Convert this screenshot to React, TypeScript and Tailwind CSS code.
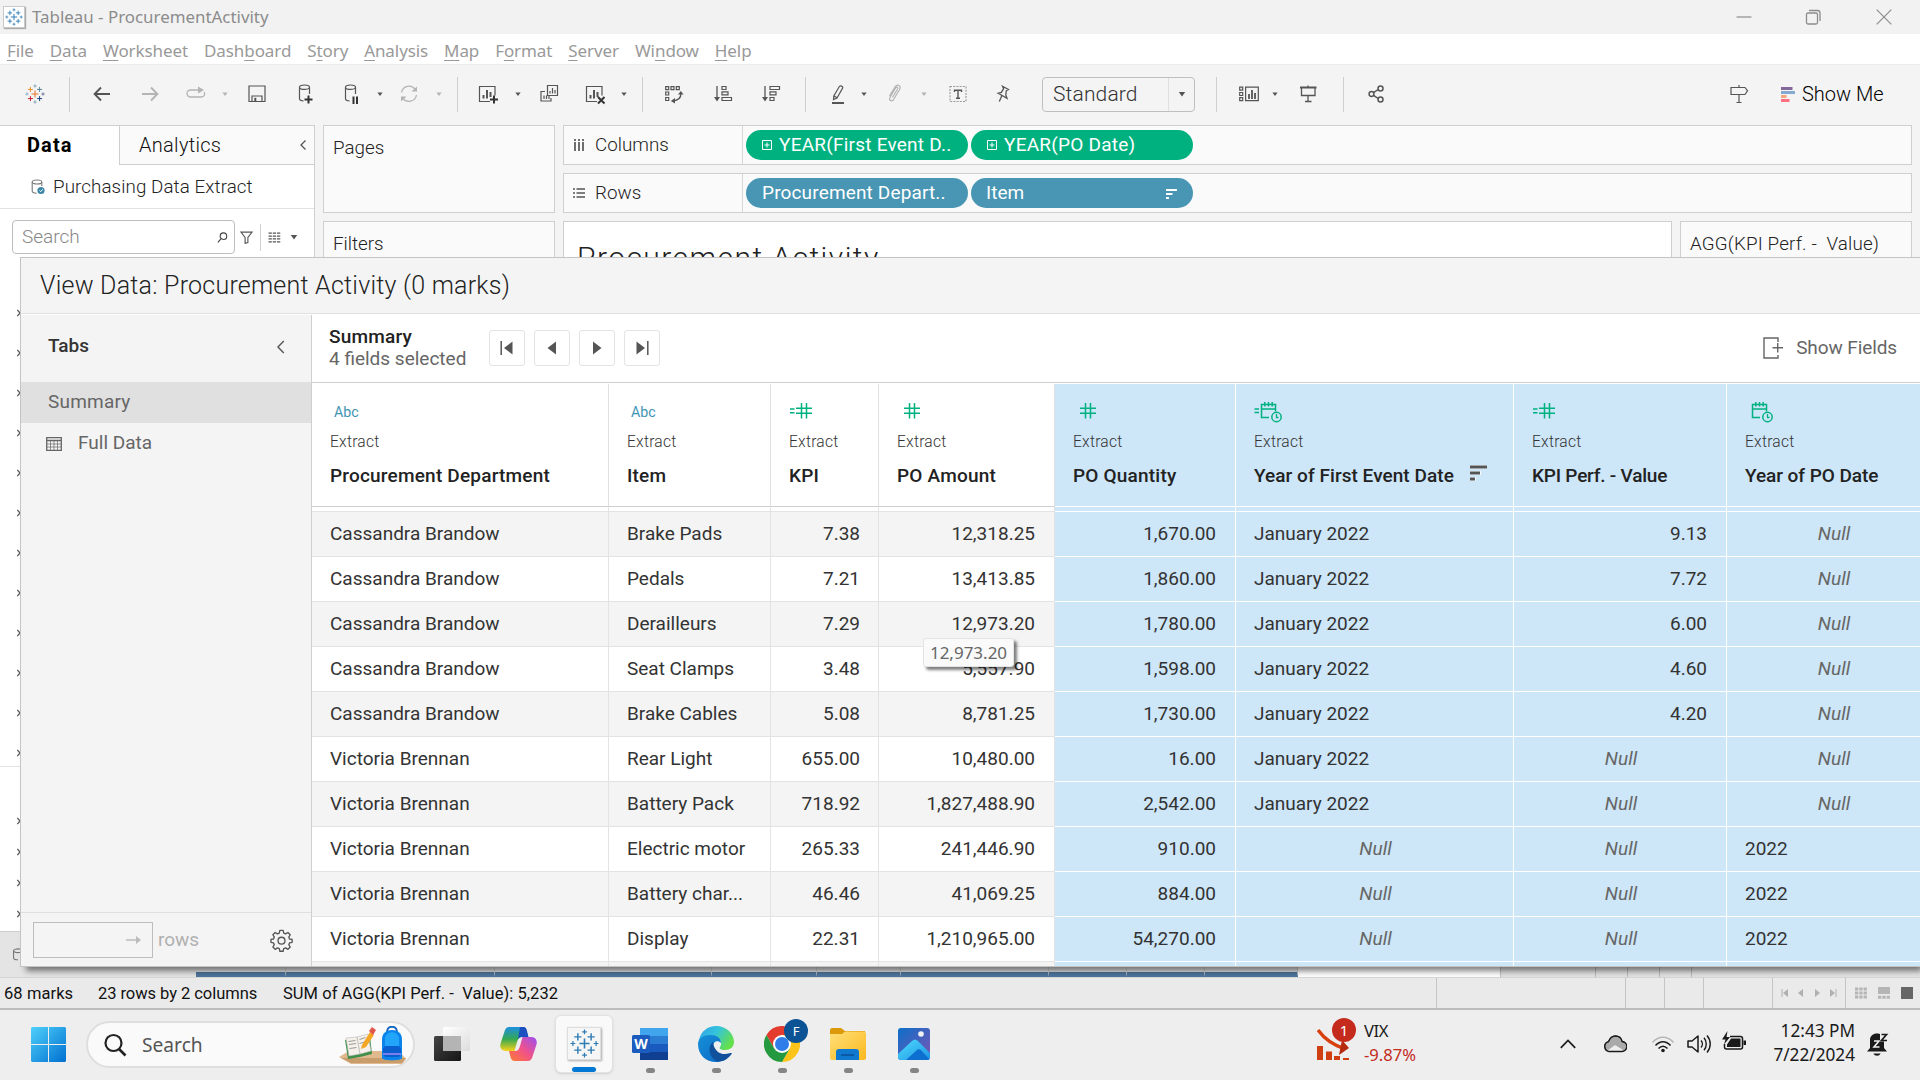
import React from "react";

/* ---------- icons ---------- */

type IconProps = { className?: string; children: React.ReactNode; box?: string };
function Icon({ className = "", children, box = "0 0 24 24" }: IconProps) {
  return (
    <svg viewBox={box} fill="none" stroke="currentColor" className={`shrink-0 ${className}`}>
      {children}
    </svg>
  );
}

function Plus({ x, y, r, c, w }: { x: number; y: number; r: number; c: string; w: number }) {
  return <path d={`M${x - r} ${y}H${x + r}M${x} ${y - r}V${y + r}`} stroke={c} strokeWidth={w} />;
}

const blueMarks = ["#2f7cb5", "#2f7cb5", "#2f7cb5", "#2f7cb5", "#2f7cb5", "#2f7cb5", "#2f7cb5", "#2f7cb5", "#2f7cb5"];
const colorMarks = ["#e8762c", "#eb912c", "#5b879b", "#c72035", "#1f457e", "#7a9db5", "#7a9db5", "#8aa8c0", "#5b6591"];

function TableauMark({ className, colors }: { className: string; colors: string[] }) {
  return (
    <Icon className={className}>
      <Plus x={12} y={12} r={4.2} c={colors[0]} w={1.3} />
      <Plus x={6.5} y={6.5} r={3} c={colors[1]} w={1.2} />
      <Plus x={17.5} y={6.5} r={3} c={colors[2]} w={1.2} />
      <Plus x={6.5} y={17.5} r={3} c={colors[3]} w={1.2} />
      <Plus x={17.5} y={17.5} r={3} c={colors[4]} w={1.2} />
      <Plus x={12} y={2.4} r={2} c={colors[5]} w={1} />
      <Plus x={12} y={21.6} r={2} c={colors[6]} w={1} />
      <Plus x={2.4} y={12} r={2} c={colors[7]} w={1} />
      <Plus x={21.6} y={12} r={2} c={colors[8]} w={1} />
    </Icon>
  );
}

function Caret({ className = "" }: { className?: string }) {
  return (
    <Icon box="0 0 8 8" className={`h-2 w-2 ${className}`}>
      <path d="M1.4 2.4h5.2L4 6z" fill="currentColor" stroke="none" />
    </Icon>
  );
}

function Sep({ className }: { className: string }) {
  return <div className={`h-[35px] w-px shrink-0 bg-[#cfcfcf] ${className}`} />;
}

const cyl = "M6.5 5.5v11.2c0 1.2 1.6 2 4 2.2M16.5 5.5v6.5";

function Database({ children, className }: { children: React.ReactNode; className: string }) {
  return (
    <Icon className={className}>
      <ellipse cx="11.5" cy="5.2" rx="5" ry="2.2" strokeWidth="1.2" />
      <path d={cyl} strokeWidth="1.2" />
      {children}
    </Icon>
  );
}

function BarsBox({ children, className }: { children?: React.ReactNode; className: string }) {
  return (
    <Icon className={className}>
      <path d="M14 19.5H3.5v-15h15.5v9" strokeWidth="1.2" />
      <path d="M7.5 16.5v-3.5M11 16.5V8M14.5 15v-5" strokeWidth="2" />
      {children}
    </Icon>
  );
}

/* ---------- toolbar ---------- */

function Toolbar() {
  const i = "h-6 w-6 text-[#555]";
  return (
    <div className="flex h-[61px] shrink-0 items-center border-t border-[#ececec] bg-[#f4f4f4] pb-[2px] text-[#555]">
      <TableauMark className="ml-[25px] h-[20px] w-[20px]" colors={colorMarks} />
      <Sep className="ml-[24px]" />
      <Icon className={`ml-[20px] ${i}`}>
        <path d="M20 12H5M11 5.500 4.600 12l6.400 6.500" strokeWidth="1.900" />
      </Icon>
      <Icon className="ml-[24px] h-6 w-6 text-[#b4b4b4]">
        <path d="M4 12h15M13 5.500l6.400 6.500-6.400 6.500" strokeWidth="1.900" />
      </Icon>
      <Icon className="ml-[22px] h-6 w-6 text-[#b4b4b4]">
        <path d="M14 8H6.500a3.500 3.500 0 0 0 0 7h11a3.200 3.200 0 0 0 2.600-5" strokeWidth="1.300" />
        <path d="M14 4.500 20 8l-6 3.500z" fill="currentColor" stroke="none" />
      </Icon>
      <Caret className="ml-[13px] text-[#b4b4b4]" />
      <Icon className={`ml-[16px] ${i}`}>
        <path d="M4 4h16v15.500H4zM7 19.500V14h10v5.500" strokeWidth="1.200" />
        <path d="M9.300 15.800h2v3.700h-2z" fill="currentColor" stroke="none" />
      </Icon>
      <Database className={`ml-[24px] ${i}`}>
        <path d="M15.500 13.500v8M11.500 17.500h8" stroke="#333" strokeWidth="2" />
      </Database>
      <Database className={`ml-[22px] ${i}`}>
        <path d="M14.500 14.500v7.500M18 14.500v7.500" stroke="#333" strokeWidth="2" />
      </Database>
      <Caret className="ml-[13px]" />
      <Icon className="ml-[13px] h-6 w-6 text-[#b4b4b4]">
        <path d="M4.500 10.500a7.600 7.600 0 0 1 13.700-3M19.500 13a7.600 7.600 0 0 1-13.700 3.200" strokeWidth="1.300" />
        <path d="M14.500 9.500h5.500V4.500zM9.500 14.500H4v5z" fill="currentColor" stroke="none" />
      </Icon>
      <Caret className="ml-[14px] text-[#b4b4b4]" />
      <Sep className="ml-[14px]" />
      <BarsBox className={`ml-[18px] ${i}`}>
        <path d="M18 13.500v8M14 17.500h8" stroke="#333" strokeWidth="2" />
      </BarsBox>
      <Caret className="ml-[14px]" />
      <Icon className={`ml-[15px] ${i}`}>
        <path d="M10.500 3.500h10v10h-10zM8 9.500H4v9.500h10v-3" strokeWidth="1.200" />
        <path d="M13 11.500V9M15.500 11.500V6M18 11.500V8M7 17v-3.500M9.500 17v-3.500M12 17v-3.500" strokeWidth="1.200" />
      </Icon>
      <BarsBox className={`ml-[22px] ${i}`}>
        <path d="m15 15 6.500 6.500M21.500 15 15 21.500" stroke="#333" strokeWidth="2" />
      </BarsBox>
      <Caret className="ml-[13px]" />
      <Sep className="ml-[14px]" />
      <Icon className={`ml-[19px] ${i}`}>
        <path d="M3.700 4.600h3v3h-3zM9 4.600h3v3H9zM14.300 4.600h3v3h-3zM3.700 10h3v3h-3zM3.700 15.500h3v3h-3z" strokeWidth="1.200" />
        <path d="M18.800 11c.3 4-2 7.500-8 8" strokeWidth="1.300" />
        <path d="M16 12.500h5.600L18.800 9zM13 16v5.600L8.800 19z" fill="currentColor" stroke="none" />
      </Icon>
      <Icon className={`ml-[25px] ${i}`}>
        <path d="M11 4.500h4v3h-4zM11 9.800h6v3h-6zM11 15.500h9.500v3H11z" strokeWidth="1.200" />
        <path d="M6 4v13" strokeWidth="1.300" />
        <path d="M3 15h6l-3 4.500z" fill="currentColor" stroke="none" />
      </Icon>
      <Icon className={`ml-[24px] ${i}`}>
        <path d="M11 4.500h9.500v3H11zM11 9.800h6v3h-6zM11 15.500h4v3h-4z" strokeWidth="1.200" />
        <path d="M6 4v13" strokeWidth="1.300" />
        <path d="M3 15h6l-3 4.500z" fill="currentColor" stroke="none" />
      </Icon>
      <Sep className="ml-[22px]" />
      <Icon className={`ml-[20px] ${i}`}>
        <path d="M13.500 4.300c1-1 3.500 0 3.300 1.500L11 16l-3.500 1.500.3-3.500zM8 14l3 1.800" strokeWidth="1.200" />
        <path d="M6 21h12" strokeWidth="2" />
      </Icon>
      <Caret className="ml-[10px]" />
      <Icon className="ml-[15px] h-6 w-6 text-[#b4b4b4]">
        <path d="m9.500 15.500 5-8.200c1-1.800-1-2.900-2-1.200L7.200 15c-1.900 3.500 1.500 5.300 3.500 2.300l5.800-9.500c2.300-4.300-2.200-6.300-4.700-2.500L6.500 14" strokeWidth="1.200" />
      </Icon>
      <Caret className="ml-[13px] text-[#b4b4b4]" />
      <Icon className={`ml-[18px] ${i}`}>
        <path d="M4 4.500h16v15H4z" strokeWidth="1.100" strokeDasharray="2 1.200" stroke="#999" />
        <path d="M8.500 10V8.300h7V10M12 8.300v8M10 16.200h4" strokeWidth="1.400" />
      </Icon>
      <Icon className={`ml-[21px] ${i}`}>
        <path d="m11.500 4.200 6 3.300-2.200 1.300-.5 4.200 1.200 3.200-8.800-4.900 3.200-.9 2.200-3.700zM10.800 13.800 8.300 19.500" strokeWidth="1.300" />
      </Icon>
      <div className="ml-[27px] flex h-[35px] w-[153px] shrink-0 items-center rounded-sm border border-[#bfbfbf]">
        <span className="flex-1 pl-[10px] text-[21px] leading-none font-[350] tracking-[0.150px] text-[#333]">Standard</span>
        <span className="flex h-full w-[26px] items-center justify-center border-l border-[#e0e0e0]">
          <Caret className="scale-125" />
        </span>
      </div>
      <Sep className="ml-[21px]" />
      <Icon className={`ml-[20px] ${i}`}>
        <path d="M2.700 5.200h3v3h-3zM2.700 10.500h3v3h-3zM2.700 15.700h3v3h-3zM8.600 5.200h12.700v13.500H8.600z" strokeWidth="1.200" />
        <path d="M12 17v-5M15 17V8M18 17v-6" strokeWidth="1.800" />
      </Icon>
      <Caret className="ml-[10px]" />
      <Icon className={`ml-[17px] ${i}`}>
        <path d="M4 5.500h16.500" strokeWidth="2" />
        <path d="M5.500 6v7.500h13.500V6M12 3.500V5M12 14v5.500M9 19.500h6.500" strokeWidth="1.300" />
      </Icon>
      <Sep className="ml-[23px]" />
      <Icon className={`ml-[21px] ${i}`}>
        <path d="m8.500 10.700 4.700-3.200M8.500 13.300l4.700 3.200" strokeWidth="1.500" />
        <circle cx="6.500" cy="12" r="2.400" strokeWidth="1.500" />
        <circle cx="15.500" cy="6.500" r="2.500" strokeWidth="1.500" />
        <circle cx="15.500" cy="17.500" r="2.500" strokeWidth="1.500" />
      </Icon>
      <div className="ml-auto flex items-center pr-[34px]">
        <Icon className="h-6 w-6">
          <path d="M4 5.500h14l2.500 3.300-2.500 3.700H4zM12 3v2M12 12.500v8.500M9.500 20.500h5" strokeWidth="1.200" />
        </Icon>
        <svg viewBox="0 0 14 15" className="ml-[30px] h-[15px] w-[14px]">
          <path d="M0 0h11.500v3H0z" fill="#85689c" />
          <path d="M0 4h14v3H0z" fill="#85a9cf" />
          <path d="M0 8h5.500v3H0z" fill="#f5a47c" />
          <path d="M0 12h8.500v3H0z" fill="#ff6f7f" />
        </svg>
        <span className="ml-[7px] w-[84px] text-[20px] leading-none font-[350] whitespace-nowrap text-black">Show Me</span>
      </div>
    </div>
  );
}

/* ---------- title bar and menu ---------- */

const menu: [string, string, string][] = [
  ["", "F", "ile"], ["", "D", "ata"], ["", "W", "orksheet"], ["Dash", "b", "oard"], ["S", "t", "ory"],
  ["", "A", "nalysis"], ["", "M", "ap"], ["F", "o", "rmat"], ["", "S", "erver"], ["Wi", "n", "dow"], ["", "H", "elp"],
];

function TitleBar() {
  return (
    <div className="flex h-[34px] shrink-0 items-center bg-[#f2f2f2] text-[#8c8c8c]">
      <div className="ml-[3px] flex h-[22px] w-[22px] items-center justify-center border border-[#c9c9c9] bg-white shadow-[1px_1px_1px_#aaa]">
        <TableauMark className="h-[18px] w-[18px]" colors={blueMarks} />
      </div>
      <span className="ml-[7px] pt-px font-['Noto_Sans'] text-[16.900px] leading-none">Tableau - ProcurementActivity</span>
      <div className="ml-auto flex items-center pr-[28px]">
        <Icon box="0 0 16 16" className="h-4 w-4"><path d="M.5 8h15" strokeWidth="1.200" /></Icon>
        <Icon box="0 0 16 16" className="ml-[53px] h-4 w-4">
          <rect x="1.500" y="4" width="11" height="11" rx="1.500" strokeWidth="1.300" />
          <path d="M4 1.500h8.500c1.500 0 2.500 1 2.500 2.500v8" strokeWidth="1.300" />
        </Icon>
        <Icon box="0 0 16 16" className="ml-[55px] h-4 w-4"><path d="m.7.700 14.600 14.600M15.300.700.700 15.300" strokeWidth="1.200" /></Icon>
      </div>
    </div>
  );
}

function MenuBar() {
  return (
    <div className="flex h-[30px] shrink-0 items-center gap-[15.900px] bg-white pt-[3px] pl-[7px] font-['Noto_Sans'] text-[17px] leading-none tracking-[-0.080px] text-[#999]">
      {menu.map(([a, u, b]) => (
        <span key={a + u + b}>
          {a}<span className="underline decoration-1 underline-offset-[3px]">{u}</span>{b}
        </span>
      ))}
    </div>
  );
}

/* ---------- worksheet behind the dialog ---------- */

function DataPane() {
  return (
    <div className="flex w-[315px] shrink-0 flex-col">
      <div className="flex h-[807px] flex-col border-t border-r border-b border-[#cfcfcf] bg-white">
        <div className="flex h-[39px] shrink-0">
          <div className="flex w-[119px] items-center pb-[2px] pl-[27px] text-[20px] font-bold tracking-[1.100px] text-black">Data</div>
          <div className="flex flex-1 items-center justify-between border-b border-l border-[#cfcfcf] bg-[#fafafa] pr-[7px] pl-[19px] text-[20px] font-[350] tracking-[0.300px] text-[#111]">
            Analytics
            <Icon box="0 0 8 12" className="h-[12px] w-[8px] text-[#555]"><path d="M6.500 1.500 2 6l4.500 4.500" strokeWidth="1.300" /></Icon>
          </div>
        </div>
        <div className="flex h-[44px] shrink-0 items-center border-b border-[#e2e2e2] pl-[31px]">
          <Icon box="0 0 14 16" className="h-4 w-[14px] text-[#777]">
            <ellipse cx="6" cy="3" rx="4.800" ry="2" strokeWidth="1.100" />
            <path d="M1.200 3v9c0 1.500 2 2.200 4.500 2.200M10.800 3v4" strokeWidth="1.100" />
            <circle cx="10" cy="11.500" r="3.600" fill="#3d86a8" stroke="none" />
            <path d="m8.500 11.500 1.200 1.200 2-2.400" stroke="#fff" strokeWidth="1" />
          </Icon>
          <span className="ml-[8px] pt-px text-[18.800px] font-[350] tracking-[0.080px] text-[#222]">Purchasing Data Extract</span>
        </div>
        <div className="flex h-[56px] shrink-0 items-center pl-3">
          <div className="flex h-[34px] w-[223px] items-center justify-between rounded-sm border border-[#bdbdbd] pr-[6px] pl-[9px] text-[19px] font-light text-[#888]">
            Search
            <Icon box="0 0 12 12" className="h-[11px] w-[11px] text-[#444]">
              <circle cx="7" cy="4.500" r="3.600" strokeWidth="1.200" /><path d="M4.500 7.200 1 11.300" strokeWidth="1.200" />
            </Icon>
          </div>
          <Icon box="0 0 14 14" className="ml-[5px] h-[13px] w-[13px] text-[#555]"><path d="M1 1.200h12L8.500 7v5.500l-3 .8V7z" strokeWidth="1.200" /></Icon>
          <div className="ml-[7px] h-[27px] w-px bg-[#d0d0d0]" />
          <Icon box="0 0 13 12" className="ml-[7px] h-[11px] w-[13px] text-[#555]"><path d="M0 1.200h13M0 4.400h13M0 7.600h13M0 10.800h13" strokeWidth="1.300" strokeDasharray="3.600 1" /></Icon>
          <Caret className="ml-[9px] scale-125 text-[#555]" />
        </div>
        <div className="mt-[28px] flex h-[474px] shrink-0 flex-col border-b border-[#e2e2e2] pl-[12px]">
          {Array.from({ length: 12 }, (_, k) => (
            <div key={k} className="flex h-[40px] shrink-0 items-center"><FieldCaret /></div>
          ))}
        </div>
        <div className="mt-[38px] flex flex-col pl-[12px]">
          {Array.from({ length: 4 }, (_, k) => (
            <div key={k} className="flex h-[31px] shrink-0 items-center"><FieldCaret /></div>
          ))}
        </div>
      </div>
      <div className="flex h-[45px] items-center bg-[#e4e4e4] pl-[12px]">
        <Icon box="0 0 12 14" className="h-[13px] w-[12px] text-[#777]">
          <ellipse cx="6" cy="3" rx="4.800" ry="2" strokeWidth="1.200" /><path d="M1.200 3v7.500c0 1.500 2 2.200 4.800 2.200M10.800 3v7" strokeWidth="1.200" />
        </Icon>
      </div>
    </div>
  );
}

function FieldCaret() {
  return <Icon box="0 0 8 8" className="h-[8px] w-[8px] text-[#555]"><path d="m5.300.800 2.700 3.200-2.700 3.200" strokeWidth="1.200" /></Icon>;
}

function GreenPill({ children }: { children: React.ReactNode }) {
  return (
    <div className="flex h-[30px] w-[222px] items-center rounded-full bg-[#00b180] pl-4 text-[19px] tracking-[0.230px] whitespace-nowrap text-white">
      <Icon box="0 0 10 10" className="mr-[7px] h-[10px] w-[10px]"><path d="M.5.500h9v9h-9zM2.500 5h5M5 2.500v5" strokeWidth="1" /></Icon>
      {children}
    </div>
  );
}

function Shelf({ label, icon, children }: { label: string; icon: React.ReactNode; children: React.ReactNode }) {
  return (
    <div className="flex h-[40px] shrink-0 border border-[#cfcfcf] bg-[#fafafa]">
      <div className="flex w-[179px] items-center border-r border-[#d6d6d6] pl-[9px] text-[18.800px] font-[350] text-[#222]">
        {icon}<span className="ml-[10px] pt-px">{label}</span>
      </div>
      <div className="flex items-center gap-[3px] pl-[3px]">{children}</div>
    </div>
  );
}

function Workspace() {
  return (
    <div className="flex h-[852px] shrink-0 bg-[#f4f4f4]">
      <DataPane />
      <div className="ml-2 flex w-[232px] shrink-0 flex-col gap-2 text-[18.800px] font-[350] text-[#222]">
        <div className="h-[88px] border border-[#cfcfcf] bg-[#fafafa] pt-[8px] pl-[9px]">Pages</div>
        <div className="flex-1 border border-[#cfcfcf] bg-[#fafafa] pt-[8px] pl-[9px]">Filters</div>
      </div>
      <div className="ml-[8px] flex w-[1349px] shrink-0 flex-col gap-2">
        <Shelf label="Columns" icon={<Icon box="0 0 12 12" className="h-[12px] w-[12px]"><path d="M2 0v2M6 0v2M10 0v2M2 3v9M6 3v9M10 3v9" strokeWidth="1.700" stroke="#555" /></Icon>}>
          <GreenPill>YEAR(First Event D..</GreenPill>
          <GreenPill>YEAR(PO Date)</GreenPill>
        </Shelf>
        <Shelf label="Rows" icon={<Icon box="0 0 12 12" className="h-[12px] w-[12px]"><path d="M0 2h2M0 6h2M0 10h2M3.500 2H12M3.500 6H12M3.500 10H12" strokeWidth="1.700" stroke="#555" /></Icon>}>
          <div className="flex h-[30px] w-[222px] items-center rounded-full bg-[#4896b4] pt-px pl-4 text-[19px] tracking-[0.150px] whitespace-nowrap text-white">Procurement Depart..</div>
          <div className="flex h-[30px] w-[222px] items-center justify-between rounded-full bg-[#4896b4] pt-px pr-4 pl-[15px] text-[19px] text-white">
            Item
            <Icon box="0 0 11 10" className="h-[10px] w-[11px]"><path d="M0 1h11M0 5h6.500M0 9h3" strokeWidth="2" /></Icon>
          </div>
        </Shelf>
        <div className="flex flex-1 gap-[8px]">
          <div className="w-[1109px] border border-[#cfcfcf] bg-white pt-[13px] pl-[13px] text-[30px] font-light tracking-[1.450px] text-[#222]">Procurement Activity</div>
          <div className="flex-1 border border-[#cfcfcf] bg-[#fafafa] pt-[8px] pl-[9px] text-[18.800px] font-[350] tracking-[0.160px] whitespace-pre text-[#222]">AGG(KPI Perf. -  Value)</div>
        </div>
      </div>
    </div>
  );
}

/* ---------- view data dialog ---------- */

const Hash = ({ calc }: { calc?: boolean }) => (
  <Icon box="0 0 24 16" className="h-[16px] w-[24px] text-[#00b180]">
    {calc && <path d="M1 6h4.500M1 9.700h4.500" strokeWidth="1.500" />}
    <path d="M7 5.300h16M7 10.300h16M12.500 0v15.500M17.500 0v15.500" strokeWidth="1.500" />
  </Icon>
);

const DateTime = ({ calc }: { calc?: boolean }) => (
  <Icon box="0 0 28 21" className="mt-[2px] h-[21px] w-[28px] text-[#00b180]">
    {calc && <path d="M.5 7H5M.5 10.500H5" strokeWidth="1.500" />}
    <path d="M15 15.500H7.500v-13h14v7M7.500 7H21.500M10.800 0v4.500M14.500 0v4.500M18.200 0v4.500" strokeWidth="1.500" />
    <circle cx="22.500" cy="15" r="4.700" strokeWidth="1.500" />
    <path d="M22.500 12v3.500h2" strokeWidth="1.300" />
  </Icon>
);

const Abc = () => <span className="pt-[3px] pl-[4px] text-[14.200px] text-[#4394b3]">Abc</span>;

type Col = { name: string; width: string; icon: React.ReactNode; blue?: boolean; sort?: boolean; spacing?: string };
const columns: Col[] = [
  { name: "Procurement Department", width: "w-[297px]", icon: <Abc /> },
  { name: "Item", width: "w-[162px]", icon: <Abc /> },
  { name: "KPI", width: "w-[108px]", icon: <Hash calc /> },
  { name: "PO Amount", width: "w-[176px]", icon: <Hash /> },
  { name: "PO Quantity", width: "w-[181px]", icon: <Hash />, blue: true },
  { name: "Year of First Event Date", width: "w-[278px]", icon: <DateTime calc />, blue: true, sort: true, spacing: "tracking-[0.050px]" },
  { name: "KPI Perf. - Value", width: "w-[213px]", icon: <Hash calc />, blue: true, spacing: "tracking-[-0.220px]" },
  { name: "Year of PO Date", width: "w-[213px]", icon: <DateTime />, blue: true, spacing: "tracking-[-0.050px]" },
];
const align = ["", "", "justify-end", "justify-end pr-[19px]", "justify-end pr-[19px]", "", "justify-end pr-[19px]", ""];

const J = "January 2022";
const N = "Null";
const CB = "Cassandra Brandow";
const VB = "Victoria Brennan";
const data: string[][] = [
  [CB, "Brake Pads", "7.38", "12,318.25", "1,670.00", J, "9.13", N],
  [CB, "Pedals", "7.21", "13,413.85", "1,860.00", J, "7.72", N],
  [CB, "Derailleurs", "7.29", "12,973.20", "1,780.00", J, "6.00", N],
  [CB, "Seat Clamps", "3.48", "5,557.90", "1,598.00", J, "4.60", N],
  [CB, "Brake Cables", "5.08", "8,781.25", "1,730.00", J, "4.20", N],
  [VB, "Rear Light", "655.00", "10,480.00", "16.00", J, N, N],
  [VB, "Battery Pack", "718.92", "1,827,488.90", "2,542.00", J, N, N],
  [VB, "Electric motor", "265.33", "241,446.90", "910.00", N, N, "2022"],
  [VB, "Battery char...", "46.46", "41,069.25", "884.00", N, N, "2022"],
  [VB, "Display", "22.31", "1,210,965.00", "54,270.00", N, N, "2022"],
];

function Row({ cells, height, gray }: { cells: string[]; height: string; gray: boolean }) {
  return (
    <div className={`flex shrink-0 ${height}`}>
      {columns.map((c, i) => {
        const isNull = cells[i] === N;
        const tone = c.blue ? "border-white bg-[#cde6f8]" : gray ? "border-[#e3e3e3] bg-[#f4f4f4]" : "border-[#e3e3e3] bg-white";
        return (
          <div
            key={c.name}
            className={`flex shrink-0 items-center overflow-hidden border-r border-b px-[18px] whitespace-nowrap ${c.width} ${tone} ${isNull ? "justify-center pl-[20px] text-[#666] italic" : align[i]}`}
          >
            {cells[i]}
          </div>
        );
      })}
    </div>
  );
}

function NavButton({ children }: { children: React.ReactNode }) {
  return (
    <div className="flex h-[36px] w-[36px] items-center justify-center rounded-[3px] border border-[#e3e3e3]">
      <Icon box="0 0 14 14" className="h-[14px] w-[14px] text-[#555]">{children}</Icon>
    </div>
  );
}

function Dialog() {
  return (
    <div className="absolute top-[257px] left-[20px] flex h-[710px] w-[1900px] flex-col border-t border-b border-l border-[#c4c4c4] bg-white shadow-[4px_6px_6px_-2px_rgba(0,0,0,0.5)]">
      <div className="flex h-[56px] shrink-0 items-center border-b border-[#e0e0e0] bg-[#f4f4f4] pl-[19px] text-[25px] font-[350] tracking-[0.230px] text-[#222]">
        View Data: Procurement Activity (0 marks)
      </div>
      <div className="flex min-h-0 flex-1 pt-px">
        <div className="flex w-[291px] shrink-0 flex-col border-r border-[#cfcfcf] bg-[#f4f4f4] text-[19px] text-[#666]">
          <div className="flex h-[67px] items-center justify-between pr-[26px] pb-[5px] pl-[27px] font-medium text-[#333]">
            Tabs
            <Icon box="0 0 9 15" className="mt-[2px] h-[14px] w-[9px] text-[#555]"><path d="M8 1 1.800 7.500 8 14" strokeWidth="1.500" /></Icon>
          </div>
          <div className="flex h-[41px] items-center bg-[#e0e0e0] pb-px pl-[27px] tracking-[0.200px]">Summary</div>
          <div className="flex h-[41px] items-center pb-px pl-[25px]">
            <Icon box="0 0 16 14" className="mt-[2px] h-[14px] w-[16px] text-[#666]">
              <path d="M.700.700h14.600v12.600H.700z" strokeWidth="1.300" />
              <path d="M1 3.500h14" strokeWidth="1.500" />
              <path d="M1 7h14M1 10h14M4.500 4v9M8 4v9M11.500 4v9" strokeWidth=".7" />
            </Icon>
            <span className="ml-[16px]">Full Data</span>
          </div>
          <div className="mt-auto flex h-[54px] items-center border-t border-[#e0e0e0] pr-[18px] pl-[12px]">
            <div className="mt-px flex h-[36px] w-[120px] items-center justify-end border border-[#bdbdbd] pr-[11px]">
              <Icon box="0 0 15 10" className="h-[10px] w-[15px] text-[#bbb]"><path d="M0 5h12" strokeWidth="1.500" /><path d="m10 1 5 4-5 4z" fill="currentColor" stroke="none" /></Icon>
            </div>
            <span className="ml-[5px] pt-px text-[19px] text-[#b0b0b0]">rows</span>
            <Icon className="mt-[2px] ml-auto h-[23px] w-[23px] text-[#555]">
              <circle cx="12" cy="12.200" r="3.600" strokeWidth="1.400" />
              <path d="M10.300 1.500h3.400l.6 2.800 2 .8 2.400-1.500 2.400 2.400-1.500 2.400.8 2 2.700.5v3l-2.700.6-.8 1.900 1.500 2.400-2.400 2.400-2.400-1.500-2 .8-.6 2.700h-3.400l-.6-2.700-1.900-.8-2.400 1.500L3 18.800l1.500-2.400-.8-1.900L1 13.900v-3l2.700-.5.8-2L3 6l2.400-2.400 2.400 1.500 1.900-.8z" strokeWidth="1.400" strokeLinejoin="round" />
            </Icon>
          </div>
        </div>
        <div className="flex min-w-0 flex-1 flex-col overflow-hidden">
          <div className="flex h-[68px] shrink-0 items-center border-b border-[#cfcfcf] pr-[23px] pb-[2px] pl-[17px] text-[19px]">
            <div className="w-[160px] leading-[22px]">
              <div className="font-medium tracking-[0.200px] text-[#222]">Summary</div>
              <div className="text-[#666]">4 fields selected</div>
            </div>
            <div className="flex gap-[9px]">
              <NavButton><path d="M1.200 0v14" strokeWidth="1.500" /><path d="M12.500.500v13L4 7z" fill="currentColor" stroke="none" /></NavButton>
              <NavButton><path d="M11 .5v13L2.500 7z" fill="currentColor" stroke="none" /></NavButton>
              <NavButton><path d="M3 .5v13L11.500 7z" fill="currentColor" stroke="none" /></NavButton>
              <NavButton><path d="M12.800 0v14" strokeWidth="1.500" /><path d="M1.500.500v13L10 7z" fill="currentColor" stroke="none" /></NavButton>
            </div>
            <Icon box="0 0 20 22" className="ml-auto h-[22px] w-[20px] text-[#666]">
              <path d="M15 5V1H1v20h14v-3M14.700 6v9.500M9.500 10.700h10.500" strokeWidth="1.400" />
            </Icon>
            <span className="ml-[13px] pt-px tracking-[-0.100px] text-[#666]">Show Fields</span>
          </div>
          <div className="mt-px flex h-[123px] shrink-0">
            {columns.map((c) => (
              <div key={c.name} className={`flex shrink-0 flex-col border-r border-b pl-[18px] whitespace-nowrap ${c.width} ${c.blue ? "border-white bg-[#cde6f8]" : "border-r-[#e0e0e0] border-b-[#cfcfcf]"}`}>
                <div className="mt-[16px] flex h-[22px] items-center">{c.icon}</div>
                <div className="mt-[10px] text-[15.600px] leading-[20px] font-light tracking-[0.220px] text-[#333]">Extract</div>
                <div className={`mt-[12px] flex items-center text-[19px] leading-[24px] font-medium text-[#222] ${c.spacing ?? "tracking-[0.200px]"}`}>
                  {c.name}
                  {c.sort && (
                    <Icon box="0 0 17 16" className="-mt-[6px] ml-[16px] h-[16px] w-[17px] text-[#555]">
                      <path d="M0 2h17M0 8h11M0 14h6" strokeWidth="4" stroke="#f4f9fd" />
                      <path d="M0 2h17M0 8h10M0 14h5" strokeWidth="3" />
                    </Icon>
                  )}
                </div>
              </div>
            ))}
          </div>
          <div className="flex min-h-0 flex-1 flex-col overflow-hidden text-[19px] text-[#333]">
            <Row cells={[]} height="h-[5px]" gray={false} />
            {data.map((cells, i) => <Row key={i} cells={cells} height="h-[45px]" gray={i % 2 === 0} />)}
            <Row cells={[]} height="h-[5px]" gray />
          </div>
        </div>
      </div>
      <div className="absolute top-[380px] left-[902px] flex h-[29px] w-[91px] items-center justify-center rounded-[3px] border border-[#e3e3e3] bg-[#fafafa] font-['Noto_Sans'] text-[17px] text-[#666] shadow-[3px_3px_3px_rgba(0,0,0,0.5)]">
        12,973.20
      </div>
    </div>
  );
}

/* ---------- sheet tabs, status bar ---------- */

const tabs = ["w-[90px]", "w-[209px]", "w-[217px]", "w-[105px]", "w-[84px]", "w-[148px]", "w-[78px]", "w-[78px]", "w-[93px]"];
const emptyTabs = ["w-[95px]", "w-[32px]", "w-[32px]", "w-[32px]"];
const statusCells = ["w-[189px]", "w-[39px]", "w-[39px]", "w-[69px]"];

function SheetTabs() {
  return (
    <div className="-mt-[10px] flex h-[10px] shrink-0 bg-[#e4e4e4] pl-[196px]">
      {tabs.map((w, i) => (
        <div key={i} className={`border-r border-b-[5px] border-r-[#d0d0d0] border-b-[#4e759b] bg-[#e4e4e4] ${w}`} />
      ))}
      <div className="w-[203px] border-r border-[#c0c0c0] bg-white" />
      {emptyTabs.map((w, i) => <div key={i} className={`border-r border-[#bbb] ${w}`} />)}
    </div>
  );
}

function StatusBar() {
  return (
    <div className="flex h-[33px] shrink-0 border-t border-b-2 border-t-[#d4d4d4] border-b-[#bcbcbc] bg-[#eaeaea] pl-1 text-[16.500px] leading-[31px] whitespace-pre text-[#111]">
      <span className="w-[94px] tracking-[0.080px]">68 marks</span>
      <span className="w-[185px] tracking-[-0.050px]">23 rows by 2 columns</span>
      <span className="tracking-[0.050px]">SUM of AGG(KPI Perf. -  Value): 5,232</span>
      <div className="ml-auto flex">
        {statusCells.map((w, i) => <div key={i} className={`border-l border-[#c4c4c4] ${w}`} />)}
        <div className="flex w-[73px] items-center gap-[8px] border-l border-[#c4c4c4] pl-[8px] text-[#b0b0b0]">
          <Icon box="0 0 8 8" className="h-2 w-2"><path d="M1 0v8" strokeWidth="1" /><path d="M7 0v8L2 4z" fill="currentColor" stroke="none" /></Icon>
          <Icon box="0 0 8 8" className="h-2 w-2"><path d="M6 0v8L1 4z" fill="currentColor" stroke="none" /></Icon>
          <Icon box="0 0 8 8" className="h-2 w-2"><path d="M2 0v8l5-4z" fill="currentColor" stroke="none" /></Icon>
          <Icon box="0 0 8 8" className="h-2 w-2"><path d="M7 0v8" strokeWidth="1" /><path d="M1 0v8l5-4z" fill="currentColor" stroke="none" /></Icon>
        </div>
        <div className="flex w-[75px] items-center gap-[11px] border-l border-[#c4c4c4] pl-[9px]">
          <Icon box="0 0 12 12" className="h-[12px] w-[12px] text-[#b5b5b5]"><path d="M0 2h12M0 6h12M0 10h12" strokeWidth="3" strokeDasharray="3.300 1" /></Icon>
          <Icon box="0 0 12 12" className="h-[12px] w-[12px] text-[#b5b5b5]"><path d="M0 3.500h12" strokeWidth="7" /><path d="M0 10.200h12" strokeWidth="3" strokeDasharray="3.300 1" /></Icon>
          <div className="h-[12px] w-[12px] bg-[#666]" />
        </div>
      </div>
    </div>
  );
}

/* ---------- windows taskbar ---------- */

function TaskApp({ className, children, dot = true }: { className: string; children: React.ReactNode; dot?: boolean }) {
  return (
    <div className={`flex shrink-0 flex-col items-center pt-[16px] ${className}`}>
      <div className="flex h-[36px] items-center">{children}</div>
      {dot && <div className="mt-[6px] h-[5px] w-[9px] rounded-full bg-[#858585]" />}
    </div>
  );
}

function SchoolBag() {
  return (
    <svg viewBox="0 0 68 38" className="h-[38px] w-[68px]">
      <path d="M0 31 10 25h50l7 8-4 5H12z" fill="#e0b98e" />
      <path d="M2 32h65l-4 5H12z" fill="#c99c6c" />
      <path d="m6 14 13-2 12-2 2 18-12 3-12 2z" fill="#3f8f4a" />
      <path d="m7 12 11-1 3 17-11 2zM18 11l11-3 3 17-11 3z" fill="#f5f1ea" stroke="#bbb" strokeWidth=".6" />
      <path d="m9.500 15.500 7-1m-6.500 4 7-1m-6.500 5 7-1m3-8 6-2m-6 6 7-2" stroke="#999" strokeWidth="1" />
      <path d="m23 19 8-13 4 3-8 12-5 2z" fill="#f5a623" />
      <path d="m30 5 3-4 4 3-3 5z" fill="#e2574c" />
      <path d="M48 6c0-7 10-7 10 0" fill="none" stroke="#1565c0" strokeWidth="2" />
      <path d="M43 13c0-12 20-12 20 0v19c0 3-20 3-20 0z" fill="#0a84ea" />
      <path d="M46 13c0-9 14-9 14 0v7H46z" fill="#22a4f8" />
      <rect x="44" y="20" width="18" height="11" rx="4" fill="#0b5ed0" />
      <path d="M44 28h18" stroke="#9f8cf5" strokeWidth="1.500" />
    </svg>
  );
}

function TaskBar() {
  return (
    <div className="flex h-[70px] shrink-0 items-start bg-[#eeeeee] font-['Noto_Sans'] text-[#1a1a1a]">
      <svg viewBox="0 0 35 35" className="mt-[17px] ml-[31px] h-[35px] w-[35px] shrink-0">
        <defs><linearGradient id="win" x1="0" y1="0" x2="1" y2="1"><stop offset="0" stopColor="#4fd0fb" /><stop offset="1" stopColor="#0070d0" /></linearGradient></defs>
        <path d="M1 0h16v17H0V1zM18 0h16l1 1v16H18zM0 18h17v17H1l-1-1zM18 18h17v16l-1 1H18z" fill="url(#win)" />
      </svg>
      <div className="mt-[11px] ml-[20px] flex h-[47px] w-[329px] shrink-0 items-center rounded-full border-2 border-[#dedede] bg-[#fafafa] pr-[6px] pl-[15px]">
        <Icon className="h-[24px] w-[24px] text-[#222]"><circle cx="10.500" cy="10" r="8" strokeWidth="2.200" /><path d="m16 16 6.500 6.500" strokeWidth="2.600" /></Icon>
        <span className="ml-[15px] pt-px text-[19.200px] leading-none text-[#555]">Search</span>
        <span className="ml-auto"><SchoolBag /></span>
      </div>
      <TaskApp dot={false} className="ml-[18px] w-[37px]">
        <svg viewBox="0 0 37 36" className="h-[36px] w-[37px]">
          <defs>
            <linearGradient id="tvA" x1="0" y1="0" x2="1" y2="1"><stop offset="0" stopColor="#444" /><stop offset="1" stopColor="#151515" /></linearGradient>
            <linearGradient id="tvB" x1="0" y1="0" x2="1" y2="1"><stop offset="0" stopColor="#fff" /><stop offset="1" stopColor="#ddd" /></linearGradient>
          </defs>
          <rect x="1" y="10" width="27" height="25" rx="1.500" fill="url(#tvA)" />
          <rect x="10" y="1" width="27" height="24" rx="1.500" fill="url(#tvB)" />
          <path d="M10 10h18v15H10z" fill="#b4b4b4" />
        </svg>
      </TaskApp>
      <TaskApp dot={false} className="ml-[30px] w-[37px]">
        <svg viewBox="0 0 37 36" className="h-[36px] w-[37px]">
          <defs>
            <linearGradient id="cpA" x1="0" y1="0" x2="0" y2="1"><stop offset="0" stopColor="#1d8fe0" /><stop offset=".5" stopColor="#35a853" /><stop offset="1" stopColor="#f7d21a" /></linearGradient>
            <linearGradient id="cpB" x1="1" y1="0" x2="0" y2="1"><stop offset="0" stopColor="#9a4ff0" /><stop offset=".5" stopColor="#f0528c" /><stop offset="1" stopColor="#ff7a2e" /></linearGradient>
          </defs>
          <path d="M9 1h13c3 0 4 2 4.500 4l1.500 6H22c-3 0-4 2-5 5l-2.500 9H6c-5 0-7-4-5-9l4-12c1-2 2-3 4-3z" fill="url(#cpA)" />
          <path d="M20 1h3c3 0 3.500 2 4 4l1.500 6H22c-2 0-3 1-4 2z" fill="#1b4fc0" />
          <path d="M28 35H15c-3 0-4-2-4.500-4L9 25h6c3 0 4-2 5-5l2.500-9H31c5 0 7 4 5 9l-4 12c-1 2-2 3-4 3z" fill="url(#cpB)" />
        </svg>
      </TaskApp>
      <div className="mt-[5px] ml-[18px] flex h-[58px] w-[58px] shrink-0 flex-col items-center rounded-md border border-[#e2e2e2] bg-[#f9f9f9] pt-[11px] shadow-sm">
        <div className="flex h-[34px] w-[34px] items-center justify-center border border-[#ddd] bg-[#f6f6f6] shadow-[1px_1px_2px_#aaa]">
          <TableauMark className="h-[29px] w-[29px]" colors={blueMarks} />
        </div>
        <div className="mt-[7px] h-[5px] w-[24px] shrink-0 rounded-full bg-[#0078d4]" />
      </div>
      <TaskApp className="ml-[19px] w-[36px]">
        <svg viewBox="0 0 36 34" className="h-[34px] w-[36px]">
          <path d="M8 1h28v8H8z" fill="#41a5ee" /><path d="M8 9h28v8H8z" fill="#2b7cd3" /><path d="M8 17h28v8H8z" fill="#185abd" /><path d="M8 25h28v8H8z" fill="#103f91" />
          <rect x="0" y="8" width="18" height="18" rx="1.500" fill="#1b5cbe" />
          <text x="9" y="22" textAnchor="middle" fontSize="14" fontWeight="700" fill="#fff" fontFamily="Open Sans">W</text>
        </svg>
      </TaskApp>
      <TaskApp className="ml-[30px] w-[36px]">
        <svg viewBox="0 0 36 36" className="h-[36px] w-[36px]">
          <defs>
            <linearGradient id="edA" x1="0" y1="0" x2="1" y2=".5"><stop offset="0" stopColor="#2f9fe8" /><stop offset=".5" stopColor="#35c4dc" /><stop offset="1" stopColor="#63e04c" /></linearGradient>
            <linearGradient id="edB" x1="0" y1="0" x2="1" y2="1"><stop offset="0" stopColor="#1690d8" /><stop offset="1" stopColor="#0b66c4" /></linearGradient>
          </defs>
          <path d="M1 14C3 5 10 0 18 0c11 0 18 8 18 16 0 5-4 8-9 8-4 0-6-1-5-3 3-4 0-10-6-10-7 0-12 2-15 3z" fill="url(#edA)" />
          <path d="M0 18c0-6 6-9 12-9 7 0 11 3 11 8-3-3-8-2-8 4 0 8 8 12 17 8-3 5-8 7-14 7C8 36 0 29 0 18z" fill="url(#edB)" />
          <path d="M15 16c-6 5-4 15 4 19.500C25 36 31 32 33.500 28c1-1-.5-1.500-2-.7C24 30 16 26 15 16z" fill="#11509a" />
        </svg>
      </TaskApp>
      <div className="relative">
        <TaskApp className="ml-[30px] w-[36px]">
          <svg viewBox="0 0 36 36" className="h-[36px] w-[36px]">
            <path d="M2.400 9A18 18 0 0 1 33.600 9H18L10.200 22.500z" fill="#e33b2e" />
            <path d="M33.600 9A18 18 0 0 1 18 36l7.800-13.500L18 9z" fill="#fcc419" />
            <path d="M18 36A18 18 0 0 1 2.400 9l7.800 13.500h15.600z" fill="#25993f" />
            <circle cx="18" cy="18" r="9" fill="#fff" /><circle cx="18" cy="18" r="7" fill="#2f7de9" />
          </svg>
        </TaskApp>
        <div className="absolute top-[9px] left-[50px] flex h-[24px] w-[24px] items-center justify-center rounded-full bg-[#0b5394] text-[13px] leading-none text-white">F</div>
      </div>
      <TaskApp className="ml-[30px] w-[36px]">
        <svg viewBox="0 0 36 34" className="h-[34px] w-[36px]">
          <defs><linearGradient id="fld" x1="0" y1="0" x2="1" y2="1"><stop offset="0" stopColor="#ffe07a" /><stop offset="1" stopColor="#fbb81c" /></linearGradient></defs>
          <path d="M0 3c0-1 1-2 2-2h9l4 3h20v5H0z" fill="#dc9a0a" />
          <path d="M0 7h12l3-2.500h19c1 0 2 1 2 2V31c0 1-1 2-2 2H2c-1 0-2-1-2-2z" fill="url(#fld)" />
          <path d="M6 33v-8c0-2 1-3 3-3h17c2 0 3 1 3 3v8z" fill="#0f78cf" /><path d="M11 28h13" stroke="#0a4f94" strokeWidth="1.500" />
        </svg>
      </TaskApp>
      <TaskApp className="ml-[32px] w-[32px]">
        <svg viewBox="0 0 32 34" className="h-[34px] w-[32px]">
          <defs>
            <linearGradient id="phA" x1="0" y1="0" x2="1" y2="1"><stop offset="0" stopColor="#0b6fc8" /><stop offset="1" stopColor="#7d55b5" /></linearGradient>
            <linearGradient id="phB" x1="0" y1="0" x2="1" y2="1"><stop offset="0" stopColor="#4fdcff" /><stop offset="1" stopColor="#1a8ee0" /></linearGradient>
            <clipPath id="phC"><rect y="1" width="32" height="32" rx="3" /></clipPath>
          </defs>
          <g clipPath="url(#phC)">
            <rect y="1" width="32" height="32" fill="url(#phA)" />
            <path d="m0 27 14-13c2-2 4-2 6 0l14 14v7H0z" fill="url(#phB)" />
            <path d="m8 33 11-10c1-1 3-1 4 0l9 10z" fill="#0d6fd0" />
            <circle cx="23" cy="7" r="2.800" fill="#f2f2f2" />
          </g>
        </svg>
      </TaskApp>

      <div className="ml-auto flex items-start pt-[8px] pr-[31px]">
        <svg viewBox="0 0 40 46" className="h-[46px] w-[40px]">
          <path d="M1 12c7 10 15 15 27 19" stroke="#d8400f" strokeWidth="3.500" fill="none" />
          <path d="m22 37 10-7-7-8z" fill="#b52a10" />
          <path d="M3 28v14M12 33.500V42M20 38v4M29 40v2" stroke="#cf3f12" strokeWidth="6" />
          <circle cx="27" cy="12" r="12" fill="#c42b1c" />
          <text x="27" y="17.500" textAnchor="middle" fontSize="15" fill="#fff" fontFamily="Noto Sans">1</text>
        </svg>
        <div className="ml-[7px] w-[196px] text-[16.600px] leading-[24px]">
          <div className="pt-px tracking-tight">VIX</div>
          <div className="text-[#c42b1c]">-9.87%</div>
        </div>
        <div className="flex h-[50px] items-center">
          <Icon box="0 0 16 10" className="mt-[2px] h-[10px] w-[16px]"><path d="m.8 8.800 7.200-7.300 7.200 7.300" strokeWidth="1.700" /></Icon>
          <Icon box="0 0 24 18" className="mt-[2px] ml-[27px] h-[18px] w-[24px]">
            <path d="M6 16.500a5 5 0 0 1-.5-9.800C7 2.500 10 1 12.500 1c4 0 6 2.500 6.600 5.500a5 5 0 0 1-.6 10z" fill="#aaa" />
            <path d="m4 16 8-6 9 5.500-2.500 1z" fill="#eee" stroke="none" />
            <path d="M6 16.500a5 5 0 0 1-.5-9.800C7 2.500 10 1 12.500 1c4 0 6 2.500 6.600 5.500a5 5 0 0 1-.6 10z" strokeWidth="1.300" />
          </Icon>
          <Icon box="0 0 24 18" className="mt-[2px] ml-[24px] h-[18px] w-[24px]">
            <path d="M1.500 7.500c6-7 15-7 21 0" stroke="#b5b5b5" strokeWidth="1.500" />
            <path d="M4.500 10.500c4.500-5 10.500-5 15 0M7.500 13.500c3-3 6-3 9 0" strokeWidth="1.500" />
            <circle cx="12" cy="15.500" r="1.800" fill="currentColor" stroke="none" />
          </Icon>
          <Icon box="0 0 24 20" className="mt-[2px] ml-[12px] h-[20px] w-[24px]">
            <path d="M1 7h4l6-5v16l-6-5H1z" strokeWidth="1.500" strokeLinejoin="round" />
            <path d="M14 6.500c1.800 2 1.800 5 0 7M17 3.800c3 3.500 3 9 0 12.400M20 1.500c4.300 5 4.300 12 0 17" strokeWidth="1.400" />
          </Icon>
          <Icon box="0 0 24 22" className="-mt-[2px] ml-[11px] h-[22px] w-[24px]">
            <path d="M8 5.500h10.500a2 2 0 0 1 2 2V16a2 2 0 0 1-2 2H4.500a2 2 0 0 1-2-2v-3" strokeWidth="1.500" />
            <path d="M9 7.500h9.500V16H5v-2.500zM21.500 9.500H24v4.500h-2.500zM5.500 0 0 8.500h3.500L2 13.500 8 6H4.500z" fill="currentColor" stroke="none" />
          </Icon>
        </div>
        <div className="ml-[18px] w-[91px] text-right text-[17.200px] leading-[24px] whitespace-nowrap">
          <div className="pt-px">12:43 PM</div>
          <div>7/22/2024</div>
        </div>
        <Icon box="0 0 22 24" className="mt-[15px] ml-[12px] h-[24px] w-[22px]">
          <path d="M0 18.500 3 15V7c0-4 3-6.500 7-6.500S17 3 17 7v8l3 3.500z" fill="currentColor" stroke="none" />
          <path d="M6.500 20.500h7c-1 3-6 3-7 0z" fill="currentColor" stroke="none" />
          <path d="M7 8h5l-5 6h5.500" stroke="#eee" strokeWidth="1.600" />
          <path d="M13 .5h9v8h-9z" fill="#eee" stroke="none" />
          <path d="M14.500 1.500h5l-5 6h5.500" strokeWidth="1.700" />
        </Icon>
      </div>
    </div>
  );
}

export default function App() {
  return (
    <div className="relative flex h-[1080px] w-[1920px] flex-col overflow-hidden bg-[#f4f4f4] font-['Roboto',sans-serif]">
      <TitleBar />
      <MenuBar />
      <Toolbar />
      <Workspace />
      <SheetTabs />
      <Dialog />
      <div className="relative flex flex-col">
        <StatusBar />
        <TaskBar />
      </div>
    </div>
  );
}
